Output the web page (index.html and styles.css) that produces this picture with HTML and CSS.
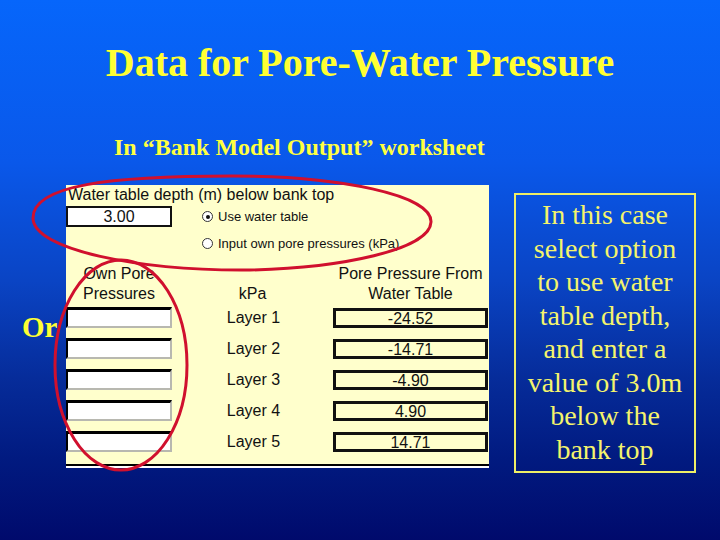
FILE: index.html
```html
<!DOCTYPE html>
<html>
<head>
<meta charset="utf-8">
<link rel="stylesheet" href="styles.css">
</head>
<body>
<div class="slide">
  <h1 class="title">Data for Pore-Water Pressure</h1>
  <p class="subtitle">In “Bank Model Output” worksheet</p>
  <div class="main">
    <div class="or">Or</div>
    <div class="panel">
      <div class="depth-label">Water table depth (m) below bank top</div>
      <div class="depth-row">
        <div class="depth-box">3.00</div>
        <div class="radio-opt"><span class="radio checked"></span>Use water table</div>
      </div>
      <div class="radio-row"><span class="radio"></span>Input own pore pressures (kPa)</div>
      <div class="hdr-grid">
        <div class="hdr">Own Pore<br>Pressures</div>
        <div class="hdr hdr-mid">kPa</div>
        <div class="hdr">Pore Pressure From<br>Water Table</div>
      </div>
      <div class="rows">
        <div class="own"></div><div class="layer">Layer 1</div><div class="val">-24.52</div>
        <div class="own"></div><div class="layer">Layer 2</div><div class="val">-14.71</div>
        <div class="own"></div><div class="layer">Layer 3</div><div class="val">-4.90</div>
        <div class="own"></div><div class="layer">Layer 4</div><div class="val">4.90</div>
        <div class="own"></div><div class="layer">Layer 5</div><div class="val">14.71</div>
      </div>
      <div class="rule"></div>
    </div>
    <div class="note">In this case<br>select option<br>to use water<br>table depth,<br>and enter a<br>value of 3.0m<br>below the<br>bank top</div>
  </div>
  <svg class="marks" width="720" height="540" viewBox="0 0 720 540">
    <path d="M 33 218 C 33 185, 110 176, 232 176 C 340 176, 432 195, 431 222 C 430 250, 340 268, 250 270 C 140 271, 33 250, 33 218 Z" fill="none" stroke="#d0102e" stroke-width="3"/>
    <ellipse cx="121" cy="365" rx="66" ry="105" fill="none" stroke="#d0102e" stroke-width="3"/>
  </svg>
</div>
</body>
</html>
```
FILE: styles.css
```css
html, body {
  margin: 0;
  padding: 0;
}
.slide {
  position: relative;
  width: 720px;
  height: 540px;
  overflow: hidden;
  background: linear-gradient(180deg, #0666fb 0%, #0a58ea 30%, #0a44c4 52%, #062c9a 70%, #011a80 85%, #000a6c 100%);
  font-family: "Liberation Serif", "Times New Roman", serif;
}
.title {
  margin: 40px 0 0 0;
  height: 46px;
  line-height: 46px;
  font-size: 40px;
  font-weight: bold;
  text-align: center;
  color: #ffff33;
}
.subtitle {
  margin: 47px 0 0 114px;
  height: 28px;
  line-height: 28px;
  font-size: 24px;
  font-weight: bold;
  color: #ffff40;
}
.main {
  display: flex;
  align-items: flex-start;
  margin-top: 24px;
}
.or {
  width: 66px;
  box-sizing: border-box;
  padding: 126px 0 0 22px;
  font-size: 29px;
  line-height: 33px;
  font-weight: bold;
  color: #ffff33;
}
.panel {
  width: 423px;
  background: #ffffcc;
  padding-top: 1px;
  font-family: "Liberation Sans", Arial, sans-serif;
  font-size: 16px;
  color: #111;
}
.depth-label {
  height: 18px;
  line-height: 18px;
  padding-left: 2px;
  white-space: nowrap;
}
.depth-row {
  display: flex;
  align-items: center;
  margin-top: 2px;
  height: 21px;
}
.depth-box {
  width: 106px;
  height: 21px;
  box-sizing: border-box;
  border: 2px solid #111;
  background: #ffffff;
  text-align: center;
  line-height: 17px;
}
.radio-opt {
  display: flex;
  align-items: center;
  margin-left: 30px;
  font-size: 13px;
}
.radio-row {
  display: flex;
  align-items: center;
  margin-top: 8px;
  height: 16px;
  padding-left: 136px;
  font-size: 13px;
}
.radio {
  position: relative;
  display: inline-block;
  width: 11px;
  height: 11px;
  box-sizing: border-box;
  border: 1px solid #333;
  border-radius: 50%;
  background: #ffffff;
  margin-right: 5px;
}
.radio.checked::after {
  content: "";
  position: absolute;
  left: 2.5px;
  top: 2.5px;
  width: 4px;
  height: 4px;
  border-radius: 50%;
  background: #111;
}
.hdr-grid {
  display: grid;
  grid-template-columns: 106px 161px 155px;
  margin-top: 13px;
  height: 40px;
}
.hdr {
  text-align: center;
  line-height: 20px;
  white-space: nowrap;
}
.hdr-mid {
  padding-top: 20px;
}
.rows {
  display: grid;
  grid-template-columns: 106px 161px 155px;
  grid-auto-rows: 21px;
  row-gap: 10px;
  margin-top: 3px;
}
.own {
  box-sizing: border-box;
  background: #ffffff;
  border-top: 3px solid #000;
  border-left: 2px solid #000;
  border-right: 2px solid #b8b8b0;
  border-bottom: 2px solid #b8b8b0;
}
.layer {
  text-align: center;
  line-height: 21px;
  padding-left: 2px;
}
.val {
  box-sizing: border-box;
  border: 3px solid #111;
  text-align: center;
  line-height: 15px;
  margin-top: 1px;
  height: 20px;
}
.rule {
  margin-top: 12px;
  height: 2px;
  background: #000;
  border-bottom: 2px solid #ffffff;
}
.note {
  width: 182px;
  height: 280px;
  box-sizing: border-box;
  margin: 8px 0 0 25px;
  border: 2px solid #eeee66;
  padding-top: 3px;
  text-align: center;
  font-size: 28px;
  line-height: 33.5px;
  color: #f4f46c;
  white-space: nowrap;
}
.marks {
  position: absolute;
  left: 0;
  top: 0;
  pointer-events: none;
}
```
